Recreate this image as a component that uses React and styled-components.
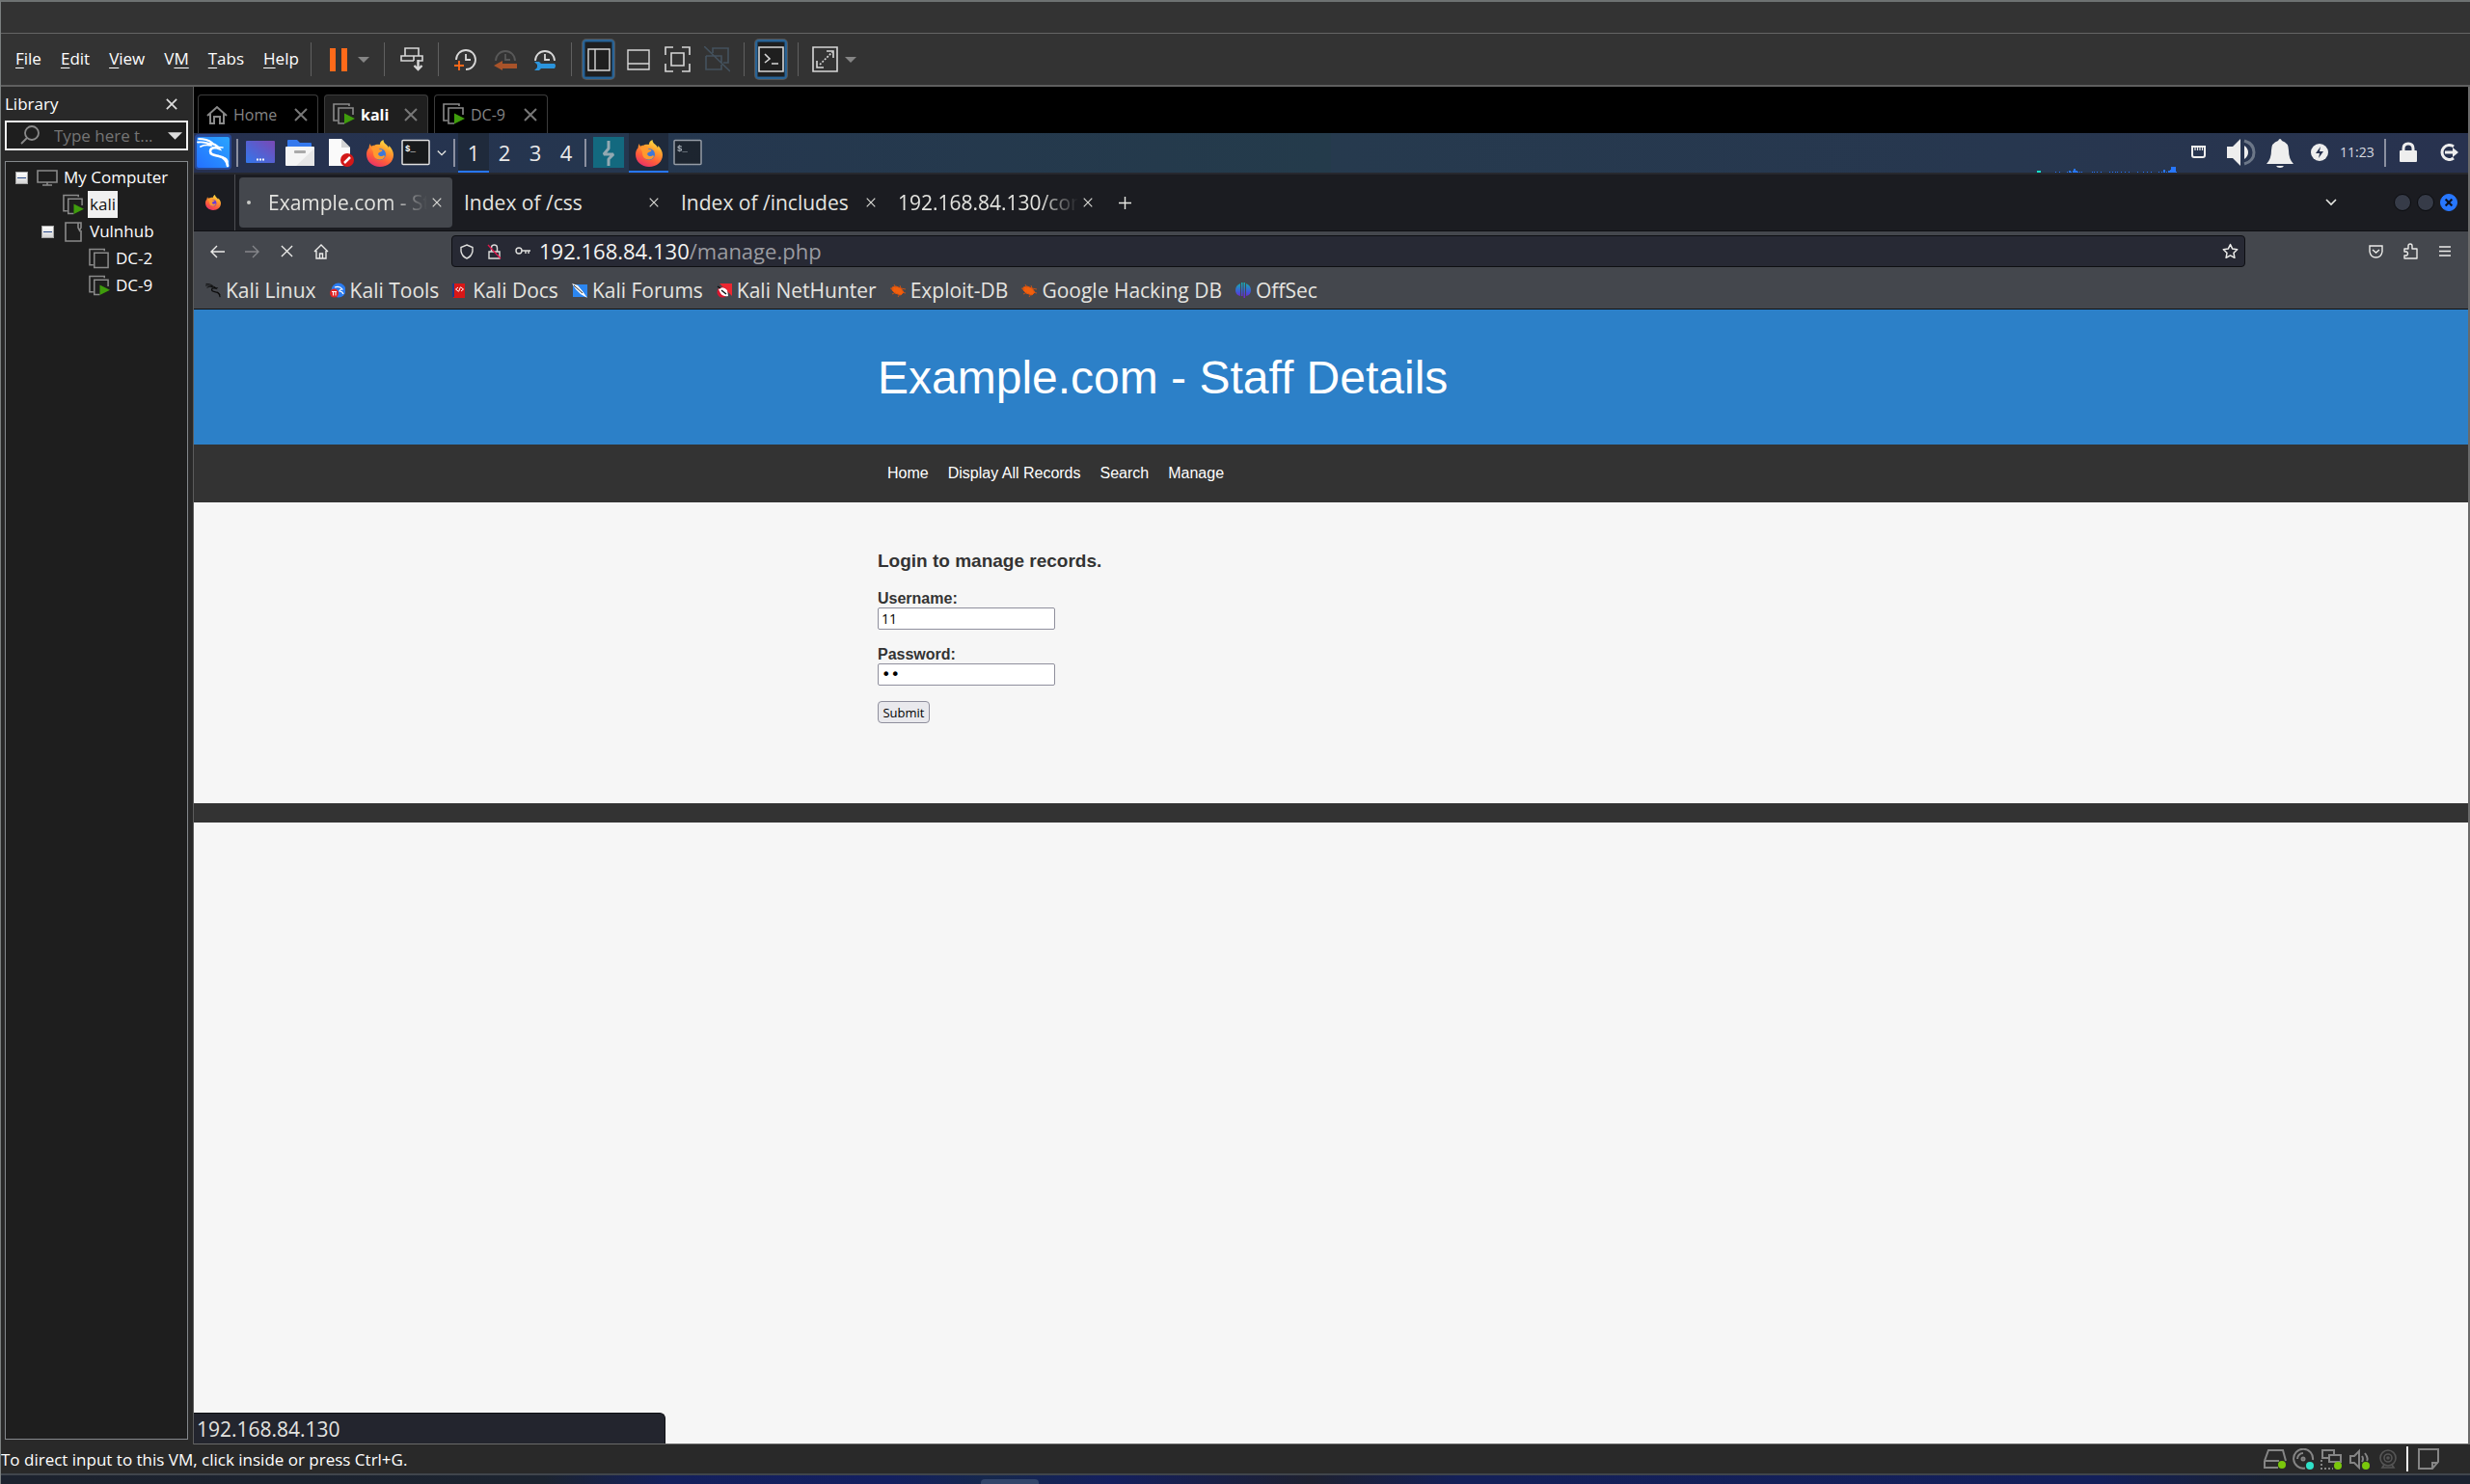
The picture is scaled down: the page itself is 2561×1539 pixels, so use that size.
import React from "react";
import styled, { createGlobalStyle } from "styled-components";

const hostFont = '"Open Sans", "Noto Sans", sans-serif';
const guestFont = '"Open Sans", "Noto Sans", sans-serif';
const siteFont = '"Liberation Sans", Arial, sans-serif';

const GlobalStyle = createGlobalStyle`
  *, *::before, *::after { box-sizing: border-box; }
  body { margin: 0; background: #292929; }
  button, input { font: inherit; color: inherit; }
  button { background: none; border: 0; padding: 0; cursor: pointer; }
  a { color: inherit; text-decoration: none; }
  svg { display: block; flex: none; }
  h1, h3, p { margin: 0; }
`;

/* ---------- Host window ---------- */

const Window = styled.div`
  display: flex;
  flex-direction: column;
  height: 100vh;
  overflow: hidden;
  border-left: 1px solid #7b7f7f;
  border-top: 2px solid #6e7272;
  background: #292929;
  color: #fff;
  font-family: ${hostFont};
  font-size: 17px;
`;

const TitleBar = styled.div`
  flex: none;
  height: 33px;
  background: #333;
  border-bottom: 1px solid #646464;
`;

const MenuBar = styled.header`
  flex: none;
  display: flex;
  align-items: center;
  height: 55px;
  background: #333;
  border-bottom: 2px solid #5f5f5f;
`;

const Menus = styled.nav`
  display: flex;
  flex: none;
  width: 321px;
  padding: 0 0 2px 15px;
  gap: 20px;
`;

const MenuButton = styled.button`
  line-height: 24px;
  white-space: nowrap;
  u { text-underline-offset: 3px; text-decoration-thickness: 1px; text-decoration-skip-ink: none; }
`;

const ToolGroup = styled.div`
  display: flex;
  align-items: center;
  height: 35px;
  padding: 0 11px;
  gap: ${(p) => (p.$tight ? 0 : 8)}px;
  border-left: 1px solid #606060;
`;

const ToolButton = styled.button`
  display: flex;
  align-items: center;
  justify-content: center;
  width: ${(p) => (p.$caret ? 20 : 33)}px;
  height: 41px;
  border-radius: 4px;
  ${(p) => p.$on && "background: #1f1f1f; border: 2px solid #2a6496; box-shadow: inset 0 0 0 1px #1d3f5c, 0 0 0 1px #555;"}
`;

const Body = styled.div`
  flex: 1;
  min-height: 0;
  display: flex;
`;

/* ---------- Library ---------- */

const Sidebar = styled.aside`
  flex: none;
  display: flex;
  flex-direction: column;
  width: 200px;
  padding: 0 5px 5px 4px;
  border-right: 1px solid #5c5c5c;
`;

const SidebarHead = styled.div`
  display: flex;
  align-items: center;
  justify-content: space-between;
  height: 35px;
  padding-right: 11px;
`;

const SearchBox = styled.div`
  display: flex;
  align-items: center;
  height: 31px;
  border: 2px solid #f0f0f0;
  background: #1e1e1e;
  padding: 0 4px 0 14px;
`;

const SearchInput = styled.input`
  flex: 1;
  min-width: 0;
  margin-left: 14px;
  border: 0;
  padding: 0;
  outline: 0;
  background: none;
  &::placeholder { color: #757575; opacity: 1; }
`;

const Tree = styled.ul`
  flex: 1;
  margin: 11px 0 0;
  padding: 2px 0;
  list-style: none;
  border: 1px solid #84888c;
  background: #1e1e1e;
`;

const TreeRow = styled.li`
  display: flex;
  align-items: center;
  height: 28px;
  padding-left: ${(p) => p.$indent}px;
  gap: 4px;
`;

const TreeLabel = styled.span`
  line-height: 28px;
  padding: 0 2px;
  font-size: 17px;
  white-space: nowrap;
  ${(p) => p.$selected && "background: #f0f0f0; color: #111;"}
`;

const Expander = styled.button`
  width: 13px;
  height: 13px;
  margin-right: 5px;
  background: linear-gradient(#fff, #d4d4d4);
  border: 1px solid #a5a5a5;
  display: flex;
  align-items: center;
  justify-content: center;
  &::after { content: ""; width: 9px; height: 1px; background: #2c4c8c; }
`;

/* ---------- VM area ---------- */

const VmArea = styled.section`
  flex: 1;
  min-width: 0;
  display: flex;
  flex-direction: column;
  background: #000;
  border-right: 2px solid #6a6a6a;
  border-bottom: 1px solid #6a6a6a;
`;

const VmTabs = styled.div`
  flex: none;
  display: flex;
  align-items: flex-end;
  height: 48px;
  padding-left: 4px;
  gap: 6px;
`;

const VmTab = styled.div`
  display: flex;
  align-items: center;
  height: 40px;
  width: ${(p) => p.$width}px;
  padding: 0 10px 0 8px;
  border: 1px solid #3c3c3c;
  border-bottom: 0;
  border-radius: 4px 4px 0 0;
  background: ${(p) => (p.$active ? "#1f1f1f" : "#000")};
  color: ${(p) => (p.$active ? "#fff" : "#858585")};
  font-weight: ${(p) => (p.$active ? 700 : 400)};
  font-size: 16px;
  span { flex: 1; margin-left: 6px; }
`;

/* ---------- Guest desktop panel ---------- */

const Panel = styled.div`
  flex: none;
  display: flex;
  align-items: stretch;
  height: 41px;
  background: linear-gradient(90deg, #26304f 0%, #25374f 20%, #243b4b 50%, #263a4e 50%, #27374f 80%, #28324f 100%);
  color: #eaeaea;
  font-family: ${guestFont};
`;

const PanelButton = styled.button`
  display: flex;
  align-items: center;
  justify-content: center;
  width: ${(p) => p.$width || 41}px;
  height: 41px;
  ${(p) => p.$active && "background: #1f2a3b; box-shadow: inset 0 -2px 0 #2777ff;"}
`;

const Workspace = styled(PanelButton)`
  padding-bottom: 2px;
  font-size: 22px;
`;

const PanelLine = styled.span`
  width: 2px;
  margin: 6px 3px;
  background: #8b90a0;
`;

const PanelClock = styled.time`
  width: 43px;
  font-size: 14px;
  line-height: 40px;
  color: #d8dbe0;
`;

const Spacer = styled.span`
  flex: 1;
`;

/* ---------- Browser ---------- */

const Browser = styled.div`
  flex: 1;
  min-height: 0;
  display: flex;
  flex-direction: column;
  position: relative;
  font-family: ${guestFont};
  font-size: 21px;
  color: #e4e4e0;
`;

const TabStrip = styled.div`
  flex: none;
  display: flex;
  align-items: center;
  height: 61px;
  background: #1b1c21;
  border-top: 2px solid #26282e;
  border-bottom: 1px solid #101114;
  padding-right: 11px;
`;

const PinnedView = styled.button`
  display: flex;
  align-items: center;
  justify-content: center;
  align-self: stretch;
  width: 43px;
  margin-right: 4px;
  padding-right: 2px;
  border-right: 1px solid #4c4d52;
`;

const BrowserTab = styled.div`
  display: flex;
  align-items: center;
  flex: none;
  width: 221px;
  height: 52px;
  margin-right: 4px;
  padding: 0 6px 0 8px;
  border-radius: 4px;
  background: ${(p) => (p.$active ? "#44474d" : "transparent")};
`;

const TabTitle = styled.span`
  flex: 1;
  min-width: 0;
  padding-bottom: 1px;
  white-space: nowrap;
  ${(p) => p.$fade && "mask-image: linear-gradient(90deg, #000 calc(100% - 40px), transparent);"}
`;

const LoadingDot = styled.span`
  flex: none;
  width: 4px;
  height: 4px;
  margin-right: 18px;
  border-radius: 50%;
  background: #c9c9c6;
`;

const IconButton = styled.button`
  display: flex;
  flex: none;
  align-items: center;
  justify-content: center;
  width: ${(p) => p.$size || 36}px;
  height: ${(p) => p.$size || 36}px;
`;

const WindowButtons = styled.div`
  display: flex;
  gap: 6px;
  margin-left: 47px;
`;

const WindowButton = styled.button`
  display: flex;
  align-items: center;
  justify-content: center;
  width: 18px;
  height: 18px;
  border-radius: 50%;
  background: ${(p) => (p.$close ? "#2777ff" : "#363b48")};
  border: 1px solid ${(p) => (p.$close ? "#2777ff" : "#0b0c0f")};
`;

const NavBar = styled.div`
  flex: none;
  display: flex;
  align-items: center;
  height: 41px;
  padding: 0 6px;
  background: #44474d;
`;

const UrlBar = styled.div`
  flex: 1;
  display: flex;
  align-items: center;
  height: 33px;
  margin: 0 117px;
  border: 1px solid #0e0f13;
  border-radius: 4px;
  background: #272934;
`;

const UrlField = styled.div`
  flex: 1;
  padding: 0 0 1px 3px;
  font-size: 22px;
  line-height: 29px;
  color: #9a9ba0;
  white-space: nowrap;
  b { font-weight: 400; color: #f4f4f2; }
`;

const Bookmarks = styled.nav`
  flex: none;
  display: flex;
  align-items: center;
  height: 40px;
  padding: 0 5px;
  background: #44474d;
  border-bottom: 1px solid #101114;
`;

const Bookmark = styled.a`
  display: flex;
  align-items: center;
  gap: 5px;
  padding: 0 7px;
  white-space: nowrap;
`;

const LinkStatus = styled.output`
  position: absolute;
  left: 0;
  bottom: 0;
  width: 489px;
  height: 32px;
  padding-left: 3px;
  line-height: 32px;
  background: #23252e;
  border: 1px solid #0e0f13;
  border-left: 0;
  border-bottom: 0;
  border-radius: 0 6px 0 0;
`;

/* ---------- Web site ---------- */

const Site = styled.main`
  flex: 1;
  background: #f6f6f6;
  color: #333;
  font-family: ${siteFont};
  font-size: 16px;
  line-height: 18px;
`;

const Container = styled.div`
  width: 100%;
  max-width: 940px;
  margin: 0 auto;
`;

const SiteHeader = styled.header`
  height: 140px;
  background: #2c80c8;
  color: #fff;
  h1 { font-size: 48px; font-weight: 400; line-height: 142px; }
`;

const SiteNav = styled.nav`
  height: 60px;
  background: #333;
  color: #fff;
  a { display: inline-block; padding: 0 10px; line-height: 60px; }
`;

const Content = styled.div`
  height: 312px;
  padding-top: 51px;
`;

const SiteTitle = styled.h3`
  font-size: 19px;
  line-height: 20px;
  margin-bottom: 20px;
`;

const Field = styled.div`
  display: flex;
  flex-direction: column;
  align-items: flex-start;
  margin-bottom: 17px;
  &:last-of-type { margin-bottom: 16px; }
  label { font-weight: 700; line-height: 18px; }
`;

const TextInput = styled.input`
  width: 184px;
  height: 23px;
  padding: 1px 3px;
  border: 1px solid #8f8f9d;
  border-radius: 2px;
  background: #fff;
  color: #000;
  font-family: ${guestFont};
  font-size: 14px;
  &[type="password"] { font-family: "DejaVu Sans", sans-serif; font-size: 16px; }
`;

const SubmitButton = styled.button`
  width: 54px;
  height: 23px;
  border: 1px solid #8f8f9d;
  border-radius: 4px;
  background: #e9e9ed;
  color: #000;
  font-family: ${guestFont};
  font-size: 13px;
  line-height: 20px;
`;

const SiteFooter = styled.footer`
  height: 20px;
  background: #333;
`;

/* ---------- Host status bar ---------- */

const StatusBar = styled.footer`
  flex: none;
  display: flex;
  align-items: center;
  height: 32px;
  border-bottom: 2px solid #40454c;
  padding-right: 32px;
`;

const StatusMessage = styled.p`
  flex: 1;
  white-space: nowrap;
`;

const Device = styled.button`
  display: flex;
  justify-content: center;
  width: 29px;
`;

const StatusLine = styled.span`
  width: 2px;
  height: 26px;
  margin: 0 10px 0 5px;
  background: #f2f2f2;
`;

const Wallpaper = styled.div`
  flex: none;
  display: flex;
  align-items: flex-end;
  justify-content: center;
  height: 9px;
  padding-right: 468px;
  background: linear-gradient(90deg, #1c222e 0%, #1c2430 22%, #14205c 27%, #131f60 36%, #16284c 40%, #141f5e 45%, #1e2130 53%, #142058 59%, #131f5a 85%, #1a2230 92%, #1b2230 100%);
  &::after { content: ""; width: 60px; height: 5px; border-radius: 4px 4px 0 0; background: #33456a; }
`;

/* ---------- Drawings ---------- */

const Svg = ({ w, h = w, vb, c = "#d8d8d8", s = 2, children }) => (
  <svg width={w} height={h} viewBox={vb || `0 0 ${w} ${h}`} fill="none" stroke={c} strokeWidth={s} aria-hidden="true">
    {children}
  </svg>
);

const Cross = ({ size = 14, c = "#777", s = 2 }) => (
  <Svg w={size} vb="0 0 14 14" c={c} s={s}><path d="M1 1l12 12M13 1L1 13" /></Svg>
);
const Caret = ({ w = 12, h = 6, c = "#858585" }) => (
  <Svg w={w} h={h} vb="0 0 12 6"><path d="M0 0h12L6 6z" fill={c} stroke="none" /></Svg>
);
const Chevron = ({ w = 12, c = "#e8e8e4" }) => (
  <Svg w={w} h={8} vb="0 0 12 8" c={c} s={1.6}><path d="M1 1l5 5 5-5" /></Svg>
);

const VmIcon = ({ running, w = 23 }) => (
  <Svg w={w} h={23} vb="0 0 23 23" c="#8a8a8a" s={1.6}>
    <path d="M17 3V1H1v17h4" />
    <path d={running ? "M21 12V5H6v16h6" : "M6 5h15v16H6z"} />
    {running && <path d="M12 10.500v11l11-5.500z" fill="#3f9c0c" stroke="none" />}
  </Svg>
);

const Monitor = () => (
  <Svg w={22} h={17} c="#8a8a8a" s={1.6}><path d="M1 1h20v12H1zM11 13v3M6 16h10" /></Svg>
);
const Folder = () => (
  <Svg w={22} h={21} c="#8a8a8a" s={1.6}><path d="M19 9v11H3V1h13M16 1v5l1.500 3L19 6V1z" /></Svg>
);
const HouseTab = () => (
  <Svg w={22} h={20} c="#8a8a8a" s={2}><path d="M1 11L11 2l10 9M4 9v10h4v-7h6v7h4V9" /></Svg>
);

const ClockTop = ({ c = "#d8d8d8" }) => (
  <g stroke={c}><path d="M2 13a10 10 0 0 1 20 0" /><path d="M12 6v6h5" /></g>
);

const SharedGradients = () => (
  <svg width="0" height="0" aria-hidden="true" style={{ position: "absolute" }}>
    <defs>
      <linearGradient id="fox" x1="0.8" y1="0" x2="0.3" y2="1">
        <stop offset="0" stopColor="#fff14a" />
        <stop offset="0.35" stopColor="#ffa02e" />
        <stop offset="0.7" stopColor="#ff5c3a" />
        <stop offset="1" stopColor="#e8306a" />
      </linearGradient>
      <linearGradient id="desk" x1="0" x2="1" y1="1" y2="0">
        <stop offset="0" stopColor="#3277ec" /><stop offset="1" stopColor="#7a48b4" />
      </linearGradient>
      <linearGradient id="kali" x1="0" x2="1" y1="1" y2="0">
        <stop offset="0" stopColor="#2470ff" /><stop offset="1" stopColor="#2aa5ff" />
      </linearGradient>
      <linearGradient id="offsec" x1="0" x2="0" y1="0" y2="16" gradientUnits="userSpaceOnUse">
        <stop offset="0" stopColor="#13b1b0" /><stop offset="0.6" stopColor="#4058d8" /><stop offset="1" stopColor="#7a1fc8" />
      </linearGradient>
    </defs>
  </svg>
);

const FirefoxMark = ({ eye = "#3f78d8" }) => (
  <g stroke="none">
    <path fill="url(#fox)" d="M2.500 8.500C2.500 6 4 4 4 4c0 1.500.6 2.300 1 2.700 1-.7 2-1 3.200-.9C9.500 5 11 4.500 12 5c1-.3 1.500-.2 2-.1C13.800 3 15 1 17.500 0c0 2 1 3.400 2.500 4.600C21.500 5.800 22.400 7 23 8.200c.3-.8.3-1.500.2-2.200C26 8.500 28 12 28 15.500 28 23 22 28 14 28S0 22.500 0 15c0-2.500.8-5 2.500-6.500z" />
    <circle cx="14" cy="15" r="6" fill={eye} />
    <path fill="#ff9a2e" d="M4.500 8.500c3-1.700 7-.8 9 1.200 1.500.2 3 .8 3 1.600-.2 1-2.200 1.200-3.500 2-1.300.9-1 2.200.3 3.200 2.600 1.600 4-.6 5.200-.1 1.300.6-1 4-4.500 4-4 0-7-2.800-7-6.500 0-2-1-3.500-2.500-5.400z" />
  </g>
);

const Fox = ({ size, eye }) => <Svg w={size} vb="0 0 28 28"><FirefoxMark eye={eye} /></Svg>;

const DragonPaths = ({ c }) => (
  <g stroke={c} fill="none" strokeLinecap="round">
    <path strokeWidth="1.800" d="M2 3c6 0 10 1 14 4 M1 6.500c6-.5 10 0 14 2.500 M4 11c4-2 7-2 11-1" />
    <path strokeWidth="2.600" d="M14 8c4 0 7 2 9 5l-3-1c-3 0-6 1-6 4 0 4 5 4 9 5 5 1 8 4 9 10" />
    <path strokeWidth="1.600" d="M22 11.500l5 .500M27 22c3 1 5 3 5 5" />
  </g>
);

const KaliMenuIcon = () => (
  <Svg w={41}>
    <rect x="1" y="1" width="38" height="37" rx="4" fill="#2a6fff" opacity="0.400" stroke="none" />
    <rect x="3" y="4" width="34" height="32" rx="2" fill="url(#kali)" stroke="none" />
    <g transform="translate(3 3)"><DragonPaths c="#fff" /></g>
  </Svg>
);
const DesktopIcon = () => (
  <Svg w={41}>
    <rect x="5" y="8" width="30" height="23" rx="1" fill="url(#desk)" stroke="none" />
    <path d="M16 27.500h2m1 0h2m1 0h2" stroke="#fff" />
  </Svg>
);
const FilesIcon = () => (
  <Svg w={41}>
    <g stroke="none">
      <path d="M7 16V8q0-1 1-1h9l3 3h11q1 0 1 1v5z" fill="#3479ee" />
      <rect x="5" y="14" width="30" height="20" rx="1" fill="#f5f5f5" />
      <path d="M35 16v18H16z" fill="#e6e6e6" />
      <rect x="14" y="18" width="12" height="3" rx="1" fill="#a9a9a9" />
    </g>
  </Svg>
);
const EditorIcon = () => (
  <Svg w={41}>
    <g stroke="none">
      <path d="M9 6h13l9 9v19H9z" fill="#fafafa" /><path d="M22 6l9 9h-9z" fill="#d4d4d4" />
      <circle cx="28" cy="28" r="7" fill="#d31818" />
    </g>
    <path d="M25 31l6-6" stroke="#fff" strokeWidth="2.500" />
  </Svg>
);
const TerminalGlyph = ({ dim, x = 2 }) => (
  <svg width={dim ? 41 : 35} height="41" aria-hidden="true">
    <g opacity={dim ? 0.6 : 1}>
      <rect x={x + 1} y="7.500" width="28" height="25" rx="1" fill="#181a1c" stroke="#e0e0e0" strokeWidth="1.500" />
      <text x={x + 4} y="19" fill="#fff" fontFamily="Liberation Mono, monospace" fontWeight="700" fontSize="9">$_</text>
    </g>
  </svg>
);
const BurpIcon = () => (
  <Svg w={41}>
    <rect x="4" y="4" width="32" height="32" fill="#13697f" stroke="none" />
    <path d="M20 8v8l-5 6h10l-5 5v7" stroke="#93a9b2" strokeWidth="3" strokeLinejoin="bevel" />
  </Svg>
);

const loads = [[0, 1], [4, 1], [12, 1], [14, 2], [16, 1], [18, 2], [19, 4], [21, 2], [23, 1], [25, 1], [27, 1], [38, 1], [40, 1], [43, 1], [47, 1], [56, 1], [59, 1], [62, 1], [64, 1], [68, 1], [72, 1], [76, 1], [85, 1], [91, 1], [95, 1], [99, 1], [107, 1], [110, 1], [112, 3], [115, 1], [117, 2], [119, 3], [120, 6], [122, 6], [123, 6], [125, 1]];
const LoadGraph = () => (
  <Svg w={152} h={41}>
    <g stroke="none" fill="#2777ff">
      <rect x="2" y="39" width="4" height="2" fill="#16e0c8" />
      {loads.map(([x, h]) => <rect key={x} x={21 + x} y={41 - h} width={h > 1 ? 2 : 1} height={h} />)}
    </g>
  </Svg>
);

const TrayEthernet = () => (
  <Svg w={41} c="#eee"><path d="M11 14h13v9q0 2-2 2h-9q-2 0-2-2z" /><path d="M14 15v3m2.500-3v3m2.500-3v3m2.500-3v3" strokeWidth="1.200" /></Svg>
);
const TraySpeaker = () => (
  <Svg w={41} c="#eee">
    <path d="M6 14h6l8-8v28l-8-8H6z" fill="#eee" stroke="none" />
    <path d="M24 13q4 3 4 7t-4 7z" fill="#eee" stroke="none" />
    <path d="M24 8q10 3 10 12t-10 12" stroke="#6c7788" strokeWidth="3" />
  </Svg>
);
const TrayBell = () => (
  <Svg w={41}><path fill="#eee" stroke="none" d="M6 32q5-5 5-14 0-8 7-10q2-4 4 0 7 2 7 10 0 9 5 14zM16 34h8q-1 2-4 2t-4-2z" /></Svg>
);
const TrayPower = () => (
  <Svg w={41}><circle cx="20" cy="20" r="9" fill="#eee" stroke="none" /><path d="M21 14l-5 7h4l-1 5 5-7h-4z" fill="#28324f" stroke="none" /></Svg>
);
const TrayLock = () => (
  <Svg w={41} c="#eee" s={3}><path d="M15 20v-4q0-5 5-5t5 5v4" /><rect x="11" y="18" width="18" height="12" rx="1" fill="#eee" stroke="none" /></Svg>
);
const TrayLogout = () => (
  <Svg w={41} c="#eee" s={3}><path d="M26 14a7.500 7.500 0 1 0 0 12M17 20h10" /><path d="M25 15l6 5-6 5z" fill="#eee" stroke="none" /></Svg>
);

const bookmarkIcons = {
  linux: <g transform="scale(0.470)"><DragonPaths c="#0b0b0b" /></g>,
  tools: (
    <g stroke="none">
      <circle cx="9" cy="8" r="7.500" fill="#2a7bf0" />
      <path d="M5 5q5-2 8 2-3 0-3 2 3 0 4 3" fill="none" stroke="#fff" strokeWidth="1.200" />
      <circle cx="4.500" cy="11" r="4.500" fill="#e02626" /><path d="M2 9.500h5M3.500 9.500v4M6 9.500v4" stroke="#fff" />
    </g>
  ),
  docs: (
    <g stroke="none">
      <rect x="1" y="1" width="12" height="15" fill="#d81717" /><rect x="0" y="1" width="2" height="14" fill="#203a86" />
      <path d="M6 5L3.500 7 6 9M9 5l2.500 2L9 9M8.500 4.500l-2 5" stroke="#fff" fill="none" />
    </g>
  ),
  forums: (
    <g stroke="none">
      <rect x="1" y="2" width="15" height="13" fill="#2c86f0" />
      <path d="M0 1l6 2 5 6 5 7-7-4-5-5z" fill="#fff" /><path d="M2 3l9 8" stroke="#222" />
    </g>
  ),
  hunter: (
    <g stroke="none">
      <path d="M3 1h13v13z" fill="#ee2630" /><circle cx="6" cy="10" r="5.500" fill="#d81730" />
      <path d="M2 7q5-4 9 1l1 6q-5 1-8-3" fill="#fff" /><path d="M5 8l5 4M1 4l3 2" stroke="#111" strokeWidth="1.500" />
    </g>
  ),
  bug: (
    <g stroke="#e2550c">
      <path d="M2 5l4-1 5 2 3 4-3 3-6-2-3-3z" fill="#f0600e" /><path d="M4 2l2 4M0 6l4 1M10 3l1 3 5 1M12 10l4 1M2 12l4-2M8 15l2-3" strokeWidth="0.800" />
    </g>
  ),
  offsec: (
    <g stroke="none" fill="url(#offsec)">
      <path d="M5 1v13Q0 13 0 8t5-7zM11 1v13q5-1 5-6t-5-7z" /><rect x="6" y="0" width="1.500" height="14" /><rect x="8.500" y="0" width="1.500" height="16" />
    </g>
  ),
};

const menus = [["", "F", "ile"], ["", "E", "dit"], ["", "V", "iew"], ["V", "M", ""], ["", "T", "abs"], ["", "H", "elp"]];
const bookmarks = [
  ["linux", "Kali Linux"], ["tools", "Kali Tools"], ["docs", "Kali Docs"], ["forums", "Kali Forums"],
  ["hunter", "Kali NetHunter"], ["bug", "Exploit-DB"], ["bug", "Google Hacking DB"], ["offsec", "OffSec"],
];
const tabs = [
  { title: "Example.com - St", active: true, fade: true },
  { title: "Index of /css" },
  { title: "Index of /includes" },
  { title: "192.168.84.130/con", fade: true },
];

/* ---------- Sections ---------- */

const Toolbar = () => (
  <>
    <ToolGroup $tight>
      <ToolButton aria-label="Suspend"><Svg w={18} h={24}><path d="M0 0h6v24H0zM12 0h6v24h-6z" fill="#ff6a1a" stroke="none" /></Svg></ToolButton>
      <ToolButton $caret aria-label="Power options"><Caret /></ToolButton>
    </ToolGroup>
    <ToolGroup>
      <ToolButton aria-label="Send keys">
        <Svg w={24} h={25} s={1.6}><path d="M5 1h14v8H5zM14 14H1V9h22v5h-4M14 9v5" /><path d="M18.500 13v9M14.500 19l4 4 4-4" strokeWidth="2.400" /></Svg>
      </ToolButton>
    </ToolGroup>
    <ToolGroup>
      <ToolButton aria-label="Take snapshot">
        <Svg w={24} h={24} s={1.8}><path d="M2 12A10 10 0 1 1 12 22" /><path d="M12 6v6h5" /><path d="M5 13v10M0 18h10" stroke="#ff6a1a" /></Svg>
      </ToolButton>
      <ToolButton aria-label="Revert snapshot">
        <Svg w={24} h={24} s={1.8}><ClockTop c="#585858" /><path d="M0 18l9-5v3h15v5H9v2z" fill="#a8532a" stroke="none" /></Svg>
      </ToolButton>
      <ToolButton aria-label="Manage snapshots">
        <Svg w={24} h={24} s={1.8}><ClockTop /><path d="M1 14h5l2 2h14q2 2 0 5H8l-2 2H1l3-3v-3z" fill="#2b94dc" stroke="none" /></Svg>
      </ToolButton>
    </ToolGroup>
    <ToolGroup>
      <ToolButton $on aria-label="Library"><Svg w={24} h={24} s={1.4}><path d="M1 1h22v22H1zM8 1v22" /></Svg></ToolButton>
      <ToolButton aria-label="Thumbnails"><Svg w={24} h={22} s={1.4}><path d="M1 1h22v20H1zM1 15h22" /></Svg></ToolButton>
      <ToolButton aria-label="Full screen"><Svg w={27} h={27} s={1.6}><path d="M1 9V1h8M18 1h8v8M26 18v8h-8M9 26H1v-8M7 7h13v13H7z" /></Svg></ToolButton>
      <ToolButton aria-label="Unity"><Svg w={27} h={27} c="#44525e" s={1.6}><path d="M9 7V2h16v15h-5M2 10h8M2 10v14h16v-5M9 10h9v8M0 0l27 26" /></Svg></ToolButton>
    </ToolGroup>
    <ToolGroup>
      <ToolButton $on aria-label="Console"><Svg w={27} h={27} s={1.6}><path d="M1 1h25v25H1zM7 8l5 5-5 4M14 18h7" /></Svg></ToolButton>
    </ToolGroup>
    <ToolGroup $tight>
      <ToolButton aria-label="Stretch guest">
        <Svg w={27} h={27} s={1.6}><path d="M1 1h25v25H1z" /><path d="M15 5h7v7M5 15v7h7" /><path d="M8 19L21 6" strokeDasharray="2 1.500" /></Svg>
      </ToolButton>
      <ToolButton $caret aria-label="Stretch options"><Caret /></ToolButton>
    </ToolGroup>
  </>
);

const Library = () => (
  <Sidebar>
    <SidebarHead>Library<button aria-label="Close library"><Cross size={12} c="#ddd" /></button></SidebarHead>
    <SearchBox>
      <Svg w={21} h={21} c="#8a8a8a" s={1.8}><circle cx="12" cy="8" r="7" /><path d="M7 13l-6 6" /></Svg>
      <SearchInput aria-label="Search library" placeholder="Type here t..." />
      <button aria-label="Search options"><Caret w={15} h={8} c="#dcdcdc" /></button>
    </SearchBox>
    <Tree>
      <TreeRow $indent={10}><Expander aria-label="Collapse My Computer" /><Monitor /><TreeLabel>My Computer</TreeLabel></TreeRow>
      <TreeRow $indent={59}><VmIcon running w={22} /><TreeLabel $selected>kali</TreeLabel></TreeRow>
      <TreeRow $indent={37}><Expander aria-label="Collapse Vulnhub" /><Folder /><TreeLabel>Vulnhub</TreeLabel></TreeRow>
      <TreeRow $indent={86}><VmIcon w={22} /><TreeLabel>DC-2</TreeLabel></TreeRow>
      <TreeRow $indent={86}><VmIcon running w={22} /><TreeLabel>DC-9</TreeLabel></TreeRow>
    </Tree>
  </Sidebar>
);

const DesktopPanel = () => (
  <Panel>
    <PanelButton aria-label="Applications"><KaliMenuIcon /></PanelButton>
    <PanelLine />
    <PanelButton aria-label="Show desktop"><DesktopIcon /></PanelButton>
    <PanelButton aria-label="Files"><FilesIcon /></PanelButton>
    <PanelButton aria-label="Text editor"><EditorIcon /></PanelButton>
    <PanelButton aria-label="Firefox"><Fox size={28} /></PanelButton>
    <PanelButton $width={35} aria-label="Terminal"><TerminalGlyph /></PanelButton>
    <PanelButton $width={18} aria-label="More terminals"><Chevron w={10} /></PanelButton>
    <PanelLine />
    {[1, 2, 3, 4].map((n) => <Workspace key={n} $width={32} $active={n === 1}>{n}</Workspace>)}
    <PanelLine />
    <PanelButton aria-label="Burp Suite"><BurpIcon /></PanelButton>
    <PanelButton $active aria-label="Firefox window"><Fox size={28} /></PanelButton>
    <PanelButton aria-label="Terminal window"><TerminalGlyph dim x={5} /></PanelButton>
    <Spacer />
    <LoadGraph />
    <PanelButton aria-label="Network"><TrayEthernet /></PanelButton>
    <PanelButton aria-label="Volume"><TraySpeaker /></PanelButton>
    <PanelButton aria-label="Notifications"><TrayBell /></PanelButton>
    <PanelButton aria-label="Power"><TrayPower /></PanelButton>
    <PanelClock>11:23</PanelClock>
    <PanelLine />
    <PanelButton aria-label="Lock screen"><TrayLock /></PanelButton>
    <PanelButton aria-label="Log out"><TrayLogout /></PanelButton>
  </Panel>
);

const BrowserChrome = () => (
  <>
    <TabStrip>
      <PinnedView aria-label="Firefox view"><Fox size={16} eye="#6a3ad8" /></PinnedView>
      {tabs.map((t) => (
        <BrowserTab key={t.title} $active={t.active}>
          {t.active && <LoadingDot />}
          <TabTitle $fade={t.fade}>{t.title}</TabTitle>
          <IconButton $size={20} aria-label="Close tab"><Cross size={10} c="#dcdcd8" s={1.6} /></IconButton>
        </BrowserTab>
      ))}
      <IconButton aria-label="New tab"><Svg w={13} c="#e8e8e4" s={1.4}><path d="M6.500 0v13M0 6.500h13" /></Svg></IconButton>
      <Spacer />
      <IconButton aria-label="List all tabs"><Chevron /></IconButton>
      <WindowButtons>
        <WindowButton aria-label="Minimize" />
        <WindowButton aria-label="Maximize" />
        <WindowButton $close aria-label="Close"><Cross size={8} c="#0c1220" s={4} /></WindowButton>
      </WindowButtons>
    </TabStrip>
    <NavBar>
      <IconButton aria-label="Back"><Svg w={15} h={14} c="#ececea" s={1.4}><path d="M15 7H1M7 1L1 7l6 6" /></Svg></IconButton>
      <IconButton aria-label="Forward"><Svg w={15} h={14} c="#85878b" s={1.4}><path d="M0 7h14M8 1l6 6-6 6" /></Svg></IconButton>
      <IconButton aria-label="Stop"><Cross size={13} c="#ececea" s={1.4} /></IconButton>
      <IconButton aria-label="Home"><Svg w={16} c="#ececea" s={1.4}><path d="M1 8l7-7 7 7M3 7v8h10V7M6.500 15v-5h3v5" /></Svg></IconButton>
      <UrlBar>
        <IconButton $size={29} aria-label="Tracking protection"><Svg w={16} c="#dededc" s={1.4}><path d="M8 1l6 2.500v4Q13 13 8 15 3 13 2 7.500v-4z" /></Svg></IconButton>
        <IconButton $size={29} aria-label="Connection not secure">
          <Svg w={16} c="#dededc" s={1.4}><path d="M2 8h11v7H2zM4.500 8V4q0-3 3-3t3 3v4" /><path d="M1 1l13 14" stroke="#e2184c" /></Svg>
        </IconButton>
        <IconButton $size={29} aria-label="Saved password"><Svg w={16} h={9} c="#dededc" s={1.4}><circle cx="4" cy="4" r="3" /><path d="M7 4h9M11 4v3M14 4v3" /></Svg></IconButton>
        <UrlField><b>192.168.84.130</b>/manage.php</UrlField>
        <IconButton $size={29} aria-label="Bookmark this page">
          <Svg w={17} c="#ececea" s={1.5}><path strokeLinejoin="round" d="M8.500 1.500l2.200 4.600 5 .7-3.700 3.500.9 5-4.400-2.400-4.400 2.400.9-5L1.300 6.800l5-.7z" /></Svg>
        </IconButton>
      </UrlBar>
      <IconButton aria-label="Pocket"><Svg w={15} h={14} c="#ececea" s={1.4}><path d="M1 1h13v6q-1 6-6.500 6T1 7zM4 5l3.500 3L11 5" /></Svg></IconButton>
      <IconButton aria-label="Extensions"><Svg w={15} h={17} c="#ececea" s={1.4}><path strokeLinejoin="round" d="M1 6h4V3q0-2 2-2t2 2v3h5v10H1v-3h2.500q2-2 0-4H1z" /></Svg></IconButton>
      <IconButton aria-label="Application menu"><Svg w={12} h={11} c="#ececea" s={1.4}><path d="M0 1h12M0 5.500h12M0 10h12" /></Svg></IconButton>
    </NavBar>
    <Bookmarks>
      {bookmarks.map(([icon, label]) => (
        <Bookmark key={label} href="#"><Svg w={16} s={1}>{bookmarkIcons[icon]}</Svg>{label}</Bookmark>
      ))}
    </Bookmarks>
  </>
);

const StaffSite = () => (
  <Site>
    <SiteHeader><Container><h1>Example.com - Staff Details</h1></Container></SiteHeader>
    <SiteNav>
      <Container><a href="#">Home</a><a href="#">Display All Records</a><a href="#">Search</a><a href="#">Manage</a></Container>
    </SiteNav>
    <Content>
      <Container as="form">
        <SiteTitle>Login to manage records.</SiteTitle>
        <Field><label htmlFor="user">Username:</label><TextInput id="user" defaultValue="11" /></Field>
        <Field><label htmlFor="pass">Password:</label><TextInput id="pass" type="password" defaultValue="11" /></Field>
        <SubmitButton type="button">Submit</SubmitButton>
      </Container>
    </Content>
    <SiteFooter />
  </Site>
);

const HostStatus = () => (
  <StatusBar>
    <StatusMessage>To direct input to this VM, click inside or press Ctrl+G.</StatusMessage>
    <Device aria-label="Hard disk"><Svg w={25} h={22} c="#858585"><path d="M1 13L5 2h15l3 11M1 13h15M1 13v7h14" /><circle cx="19" cy="17" r="4" fill="#7ac70c" stroke="none" /></Svg></Device>
    <Device aria-label="CD drive"><Svg w={23} h={22} c="#858585"><path d="M13 20.500A10 10 0 1 1 21 12M5 11a6 6 0 0 1 6-6" /><circle cx="11" cy="11" r="1.500" /><circle cx="18" cy="18" r="4" fill="#2fe0c8" stroke="none" /></Svg></Device>
    <Device aria-label="Network adapter"><Svg w={23} h={22} c="#858585"><path d="M9 10H2V2h12v4M9 7h12v7H9z" /><path d="M1 12v9h12" strokeDasharray="2 2" /><circle cx="18" cy="18" r="4" fill="#7ac70c" stroke="none" /></Svg></Device>
    <Device aria-label="Sound"><Svg w={21} h={22} c="#858585"><path d="M1 8h4l5-5v17l-5-5H1zM13 8q2 3 0 6M16 5q4 5 2 8" /><circle cx="17" cy="18" r="4" fill="#7ac70c" stroke="none" /></Svg></Device>
    <Device aria-label="Camera"><Svg w={18} h={20} c="#555" s={1.6}><circle cx="9" cy="9" r="8" /><circle cx="9" cy="9" r="4" /><circle cx="9" cy="9" r="1" /><path d="M5 16l-2 3h12l-2-3" /></Svg></Device>
    <StatusLine />
    <button aria-label="Message log"><Svg w={22} h={22} c="#858585"><path d="M1 1h20v13l-6 7H1zM15 21v-6h6" /></Svg></button>
  </StatusBar>
);

export default function App() {
  return (
    <Window>
      <GlobalStyle />
      <SharedGradients />
      <TitleBar />
      <MenuBar>
        <Menus>
          {menus.map(([a, key, b]) => <MenuButton key={key}>{a}<u>{key}</u>{b}</MenuButton>)}
        </Menus>
        <Toolbar />
      </MenuBar>
      <Body>
        <Library />
        <VmArea>
          <VmTabs>
            <VmTab $width={125}><HouseTab /><span>Home</span><button aria-label="Close Home"><Cross /></button></VmTab>
            <VmTab $width={108} $active><VmIcon running /><span>kali</span><button aria-label="Close kali"><Cross /></button></VmTab>
            <VmTab $width={118}><VmIcon running /><span>DC-9</span><button aria-label="Close DC-9"><Cross /></button></VmTab>
          </VmTabs>
          <DesktopPanel />
          <Browser>
            <BrowserChrome />
            <StaffSite />
            <LinkStatus>192.168.84.130</LinkStatus>
          </Browser>
        </VmArea>
      </Body>
      <HostStatus />
      <Wallpaper />
    </Window>
  );
}
